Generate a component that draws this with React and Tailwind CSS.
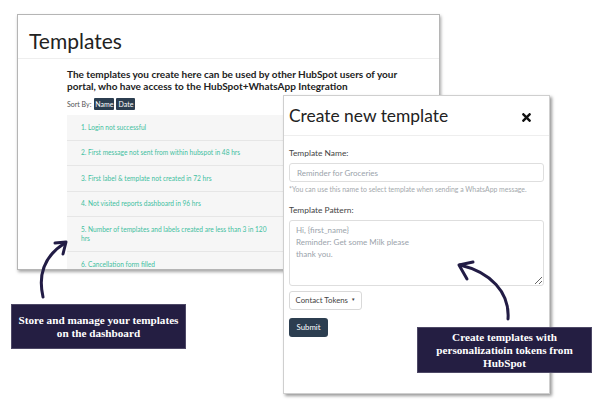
import { FaTimes } from "react-icons/fa";

const templates = [
  ["1. Login not successful"],
  ["2. First message not sent from within hubspot in 48 hrs"],
  ["3. First label & template not created in 72 hrs"],
  ["4. Not visited reports dashboard in 96 hrs"],
  ["5. Number of templates and labels created are less than 3 in 120", "hrs"],
  ["6. Cancellation form filled"],
];

function Arrows() {
  return (
    <svg
      className="absolute left-0 top-0 pointer-events-none"
      width="600"
      height="419"
      viewBox="0 0 600 419"
      fill="none"
      stroke="#221c45"
      strokeWidth="3"
      strokeLinecap="round"
      strokeLinejoin="round"
    >
      {/* left arrow */}
      <path d="M43 297 C38 275 44 256 65 243" />
      <path d="M55 243 L66 242 L63 254" />
      {/* right arrow */}
      <path d="M508 319 C510 292 490 272 460 265" />
      <path d="M473 262 L459 265 L467 279" />
    </svg>
  );
}

function TemplatesWindow() {
  return (
    <div className="absolute left-[17px] top-[14px] w-[423px] h-[256px] bg-white border border-[#b5b5b5] shadow-[1px_2px_3px_rgba(0,0,0,0.35)] overflow-hidden">
      <div className="h-[44px] border-b border-[#eeeeee] pl-[11px] pt-[13px]">
        <h1 className="text-[21px] leading-[25px] text-[#222]">Templates</h1>
      </div>

      <div className="pl-[49px] pt-[9px]">
        <p className="text-[10px] leading-[12px] font-bold text-[#222] whitespace-nowrap">
          The templates you create here can be used by other HubSpot users of your
          <br />
          portal, who have access to the HubSpot+WhatsApp Integration
        </p>

        <div className="flex items-center gap-[2px] mt-[6px] text-[7px] text-[#555]">
          <span className="mr-[1px]">Sort By:</span>
          <span className="bg-[#2c3e50] text-white rounded-[1px] h-[12px] w-[20px] flex items-center justify-center">
            Name
          </span>
          <span className="bg-[#2c3e50] text-white rounded-[1px] h-[12px] w-[19px] flex items-center justify-center">
            Date
          </span>
        </div>

        <div className="mt-[5px] w-[218px] bg-[#f6f6f6]">
          {templates.map((lines, i) => (
            <div
              key={i}
              className="px-[14px] py-[7.5px] border-b border-[#e6e6e6] text-[6.6px] leading-[9.5px] text-[#3fbf9f] whitespace-nowrap"
            >
              {lines.map((l, j) => (
                <div key={j}>{l}</div>
              ))}
            </div>
          ))}
        </div>
      </div>
    </div>
  );
}

function CreateModal() {
  return (
    <div className="absolute left-[283px] top-[95px] w-[267px] h-[299px] bg-white border border-[#cfcfcf] shadow-[2px_2px_3px_rgba(0,0,0,0.4)]">
      <div className="h-[40px] border-b border-[#eeeeee] flex items-center justify-between pl-[5px] pr-[16px]">
        <h2 className="text-[17.4px] leading-[23px] text-[#222]">Create new template</h2>
        <FaTimes className="text-[#111] w-[13px] h-[13px] mt-[4px]" />
      </div>

      <div className="px-[5px] pt-[12px] text-[8.4px] text-[#444]">
        <label className="block leading-[11px]">Template Name:</label>
        <input
          className="mt-[4px] block w-full h-[19px] border border-[#dedede] rounded-[3px] px-[7px] text-[8px] outline-none placeholder:text-[#9aa3ab]"
          placeholder="Reminder for Groceries"
        />
        <p className="mt-[3px] text-[6.9px] leading-[9px] text-[#a4a9ad] whitespace-nowrap">
          *You can use this name to select template when sending a WhatsApp message.
        </p>

        <label className="block mt-[11px] leading-[11px]">Template Pattern:</label>
        <textarea
          className="mt-[4px] block w-full h-[66px] border border-[#dedede] rounded-[3px] px-[6px] pt-[3px] text-[8px] leading-[12px] outline-none placeholder:text-[#9aa3ab]"
          placeholder={"Hi, {first_name}\nReminder: Get some Milk please\nthank you."}
        />

        <button className="mt-[5px] h-[19px] w-[73px] border border-[#d9d9d9] rounded-[3px] bg-white text-[7.8px] text-[#444] flex items-center justify-center gap-[3px]">
          Contact Tokens
          <span className="text-[4.5px]">▼</span>
        </button>

        <button className="mt-[8px] h-[19px] w-[39px] rounded-[3px] bg-[#2c3e50] text-white text-[7.8px] flex items-center justify-center">
          Submit
        </button>
      </div>
    </div>
  );
}

function Callout({ className, children }) {
  return (
    <div
      className={
        "absolute bg-[#241e42] border border-[#4d4866] text-white text-center font-bold text-[11.2px] leading-[13px] flex items-center justify-center " +
        className
      }
      style={{ fontFamily: '"Liberation Serif", "DejaVu Serif", serif' }}
    >
      <div>{children}</div>
    </div>
  );
}

export default function App() {
  return (
    <div
      className="relative w-[600px] h-[419px] bg-white overflow-hidden"
      style={{ fontFamily: 'Lato, "Open Sans", sans-serif' }}
    >
      <TemplatesWindow />
      <CreateModal />

      <Callout className="left-[11px] top-[304px] w-[175px] h-[45px]">
        Store and manage your templates
        <br />
        on the dashboard
      </Callout>

      <Callout className="left-[417px] top-[327px] w-[175px] h-[46px]">
        Create templates with
        <br />
        personalizatioin tokens from
        <br />
        HubSpot
      </Callout>

      <Arrows />
    </div>
  );
}
